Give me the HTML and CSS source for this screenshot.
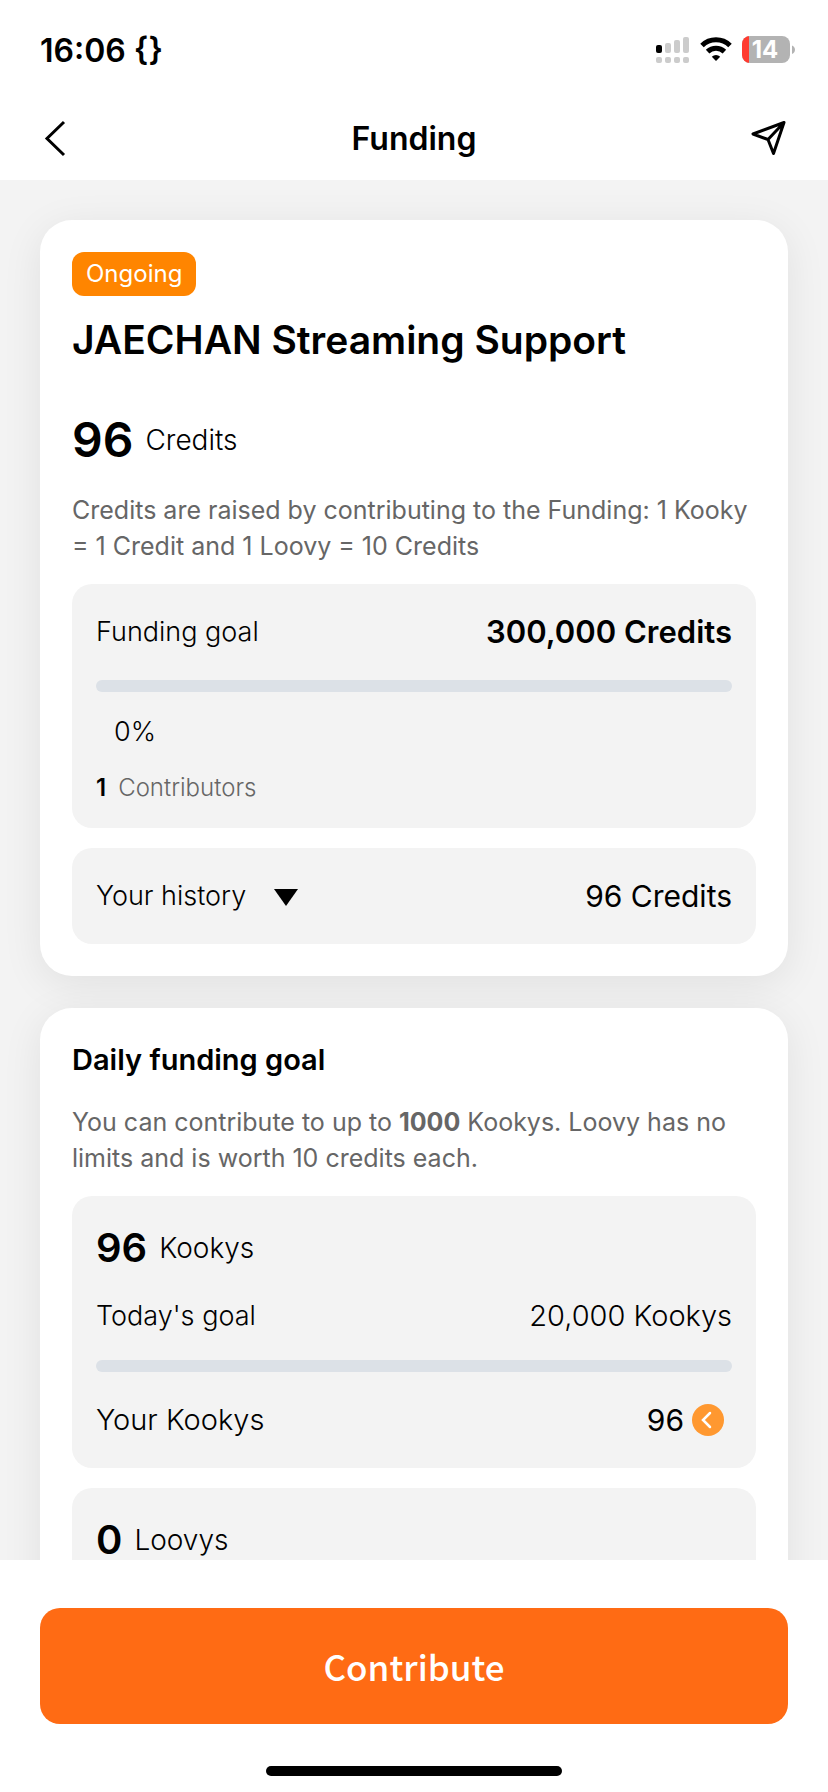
FILE: index.html
```html
<!DOCTYPE html>
<html lang="en">
<head>
  <meta charset="UTF-8">
  <meta name="viewport" content="width=device-width, initial-scale=1">
  <title>Funding</title>
  <link rel="stylesheet" href="styles.css">
</head>
<body>
  <div class="status-bar">
    <span class="status-time">16:06 {}</span>
    <div class="status-icons">
      <svg width="34" height="28" viewBox="0 0 34 28" fill="#ccc">
        <rect x="0" y="9" width="6" height="8" rx="2" fill="#000"/>
        <rect x="9" y="7" width="6" height="10" rx="2"/>
        <rect x="18" y="4" width="6" height="13" rx="2"/>
        <rect x="27" y="1" width="6" height="16" rx="2"/>
        <rect x="0" y="21" width="6" height="6" rx="2"/>
        <rect x="9" y="21" width="6" height="6" rx="2"/>
        <rect x="18" y="21" width="6" height="6" rx="2"/>
        <rect x="27" y="21" width="6" height="6" rx="2"/>
      </svg>
      <svg width="32" height="28" viewBox="0 0 32 28">
        <path d="M2 9.5a20 20 0 0 1 28 0" fill="none" stroke="#000" stroke-width="5"/>
        <path d="M7.6 15.6a12 12 0 0 1 16.800 0" fill="none" stroke="#000" stroke-width="5"/>
        <path d="M16 25l-4.200-4.300a6.200 6.200 0 0 1 8.400 0z"/>
      </svg>
      <svg width="54" height="28" viewBox="0 0 54 28">
        <clipPath id="cell"><rect x="0" y="0" width="48" height="27" rx="8"/></clipPath>
        <g clip-path="url(#cell)">
          <rect width="48" height="27" fill="#b3b3b3"/>
          <rect width="7" height="27" fill="#ff3b30"/>
        </g>
        <path d="M50 9.500c4 1.500 4 7 0 8.500z" fill="#b3b3b3"/>
        <text class="battery-level" x="23" y="22" text-anchor="middle">14</text>
      </svg>
    </div>
  </div>

  <header class="nav">
    <button class="icon-button" aria-label="Back">
      <svg width="40" height="40" viewBox="0 0 40 40" fill="none" stroke="#000" stroke-width="3">
        <path d="M24 4L7 20.500L24 37"/>
      </svg>
    </button>
    <h1 class="nav-title">Funding</h1>
    <button class="icon-button" aria-label="Share">
      <svg width="40" height="40" viewBox="0 0 40 40" fill="none" stroke="#000" stroke-width="3" stroke-linejoin="round">
        <path d="M36 4.500L5 16L20 21.500L25.500 35.500ZM36 4.500L20 21.500"/>
      </svg>
    </button>
  </header>

  <main class="content">
    <section class="card">
      <span class="badge">Ongoing</span>
      <h2 class="campaign-title">JAECHAN Streaming Support</h2>
      <p class="amount amount-total"><strong>96</strong> <span>Credits</span></p>
      <p class="description">Credits are raised by contributing to the Funding: 1 Kooky = 1 Credit and 1 Loovy = 10 Credits</p>

      <div class="panel">
        <div class="row">
          <label class="label" for="funding">Funding goal</label>
          <span class="goal-value">300,000 Credits</span>
        </div>
        <progress class="bar" id="funding" value="0" max="300000"></progress>
        <p class="percent">0%</p>
        <p class="contributors"><strong>1</strong> <span>Contributors</span></p>
      </div>

      <div class="panel">
        <div class="row">
          <button class="history-button">
            Your history
            <svg width="24" height="20" viewBox="0 0 24 20"><path d="M0 3h24L12 20z"/></svg>
          </button>
          <span class="value">96 Credits</span>
        </div>
      </div>
    </section>

    <section class="card">
      <h2 class="section-title">Daily funding goal</h2>
      <p class="description">You can contribute to up to <strong>1000</strong> Kookys. Loovy has no limits and is worth 10 credits each.</p>

      <div class="panel">
        <p class="amount"><strong>96</strong> <span>Kookys</span></p>
        <div class="row row-goal">
          <label class="label" for="kookys">Today's goal</label>
          <span class="value-light">20,000 Kookys</span>
        </div>
        <progress class="bar" id="kookys" value="0" max="20000"></progress>
        <div class="row">
          <span class="value-light">Your Kookys</span>
          <span class="value kooky-count">96
            <svg width="32" height="32" viewBox="0 0 32 32">
              <circle cx="16" cy="16" r="16" fill="#ff9830"/>
              <path d="M18 9l-7 7 7 7" fill="none" stroke="#fff" stroke-width="2.500" stroke-linecap="round"/>
            </svg>
          </span>
        </div>
      </div>

      <div class="panel">
        <p class="amount"><strong>0</strong> <span>Loovys</span></p>
      </div>
    </section>
  </main>

  <footer class="footer">
    <button class="contribute">Contribute</button>
    <div class="home-indicator"></div>
  </footer>
</body>
</html>
```

FILE: styles.css
```css
* { box-sizing: border-box; }
body { margin: 0; height: 100vh; display: flex; flex-direction: column; background: #fff; color: #000; font-family: Inter, "Liberation Sans", sans-serif; font-size: 27px; font-weight: 300; }
h1, h2, p { margin: 0; }
button { border: none; background: none; padding: 0; color: inherit; font: inherit; cursor: pointer; }
svg { display: block; flex: none; }

.status-bar { display: flex; justify-content: space-between; align-items: center; height: 96px; padding: 4px 32px 0 40px; }
.status-time { font-size: 32px; font-weight: 600; }
.status-icons { display: flex; align-items: center; gap: 10px; }
.battery-level { font-size: 24px; font-weight: 700; fill: #fff; }

.nav { display: flex; justify-content: space-between; align-items: center; height: 84px; padding: 0 40px; }
.nav-title { font-size: 32px; font-weight: 600; }

.content { flex: 1; min-height: 0; overflow-y: auto; scrollbar-width: none; padding: 40px; background: #f3f3f3; }
.card { padding: 32px; border-radius: 32px; background: #fff; box-shadow: 0 8px 40px rgba(0,0,0,0.08); }
.card + .card { margin-top: 32px; }

.badge { display: block; width: fit-content; padding: 0 14px; border-radius: 12px; background: #ff8500; color: #fff; font-size: 24px; font-weight: 400; line-height: 44px; }
.campaign-title { margin-top: 20px; font-size: 39px; font-weight: 600; line-height: 48px; }
.section-title { font-size: 29px; font-weight: 600; line-height: 40px; }
.description { margin-top: 24px; color: #666; font-size: 25px; font-weight: 400; line-height: 36px; }
.description strong { font-weight: 700; }

.amount { display: flex; align-items: center; gap: 12px; font-size: 28px; line-height: 56px; }
.amount strong { font-size: 40px; font-weight: 600; }
.amount-total { margin-top: 48px; }
.amount-total strong { font-size: 48px; }

.panel { margin-top: 20px; padding: 24px; border-radius: 20px; background: #f3f3f3; }
.row { display: flex; justify-content: space-between; align-items: center; line-height: 48px; }
.row-goal { margin-top: 20px; line-height: 40px; }
.goal-value { font-size: 31px; font-weight: 600; }
.value { font-size: 30px; font-weight: 400; }
.value-light { font-size: 29px; }
.bar { display: block; width: 100%; height: 12px; margin: 24px 0; border: none; border-radius: 6px; background: #dce1e7; appearance: none; overflow: hidden; }
.bar::-webkit-progress-bar { background: #dce1e7; }
.bar::-webkit-progress-value { background: #ff6b14; }
.percent { margin-top: -4px; padding-left: 18px; line-height: 40px; }
.contributors { display: flex; gap: 12px; margin-top: 20px; font-size: 24px; line-height: 32px; }
.contributors strong { font-weight: 600; }
.contributors span { color: #666; }
.history-button { display: flex; align-items: center; gap: 28px; line-height: 48px; }
.kooky-count { display: flex; align-items: center; gap: 8px; padding-right: 8px; }

.footer { display: flex; flex-direction: column; align-items: center; gap: 42px; padding: 48px 40px 16px; background: #fff; }
.contribute { width: 100%; height: 116px; padding-bottom: 2px; border-radius: 20px; background: #ff6b14; color: #fff; font-family: "Noto Sans CJK KR", sans-serif; font-size: 35px; font-weight: 500; }
.home-indicator { width: 296px; height: 10px; border-radius: 5px; background: #000; }
```
